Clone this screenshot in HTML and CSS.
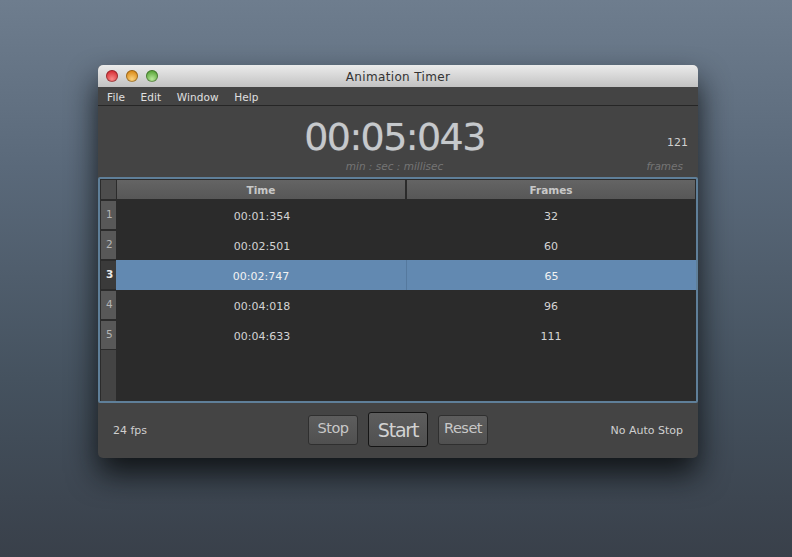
FILE: index.html
```html
<html>
  <head>
    <title>Animation Timer</title>
    <link rel="stylesheet" href="styles.css">
  </head>
  <body>
    <div class="window">
      <div class="titlebar">
        <div class="lights">
          <span class="light red"></span>
          <span class="light yellow"></span>
          <span class="light green"></span>
        </div>
        <div class="title">Animation Timer</div>
      </div>
      <div class="menubar">
        <span>File</span>
        <span>Edit</span>
        <span>Window</span>
        <span>Help</span>
      </div>
      <div class="readout">
        <div class="clock">
          <div class="clock-time">00:05:043</div>
          <div class="caption">min : sec : millisec</div>
        </div>
        <div class="count">
          <div class="count-value">121</div>
          <div class="caption">frames</div>
        </div>
      </div>
      <div class="table">
        <div class="head">
          <div class="corner"></div>
          <div class="head-cell">Time</div>
          <div class="head-cell">Frames</div>
        </div>
        <div class="row">
          <div class="num">1</div>
          <div class="cell">00:01:354</div>
          <div class="cell">32</div>
        </div>
        <div class="row">
          <div class="num">2</div>
          <div class="cell">00:02:501</div>
          <div class="cell">60</div>
        </div>
        <div class="row selected">
          <div class="num">3</div>
          <div class="cell">00:02:747</div>
          <div class="cell">65</div>
        </div>
        <div class="row">
          <div class="num">4</div>
          <div class="cell">00:04:018</div>
          <div class="cell">96</div>
        </div>
        <div class="row">
          <div class="num">5</div>
          <div class="cell">00:04:633</div>
          <div class="cell">111</div>
        </div>
        <div class="filler">
          <div class="filler-side"></div>
        </div>
      </div>
      <div class="footer">
        <div class="fps">24 fps</div>
        <div class="buttons">
          <button class="btn">Stop</button>
          <button class="btn btn-main">Start</button>
          <button class="btn">Reset</button>
        </div>
        <div class="autostop">No Auto Stop</div>
      </div>
    </div>
  </body>
</html>
```

FILE: styles.css
```css
html,
body {
  height: 100%;
}

body {
  margin: 0;
  overflow: hidden;
  box-sizing: border-box;
  padding: 65px 0 0 98px;
  font-family: "DejaVu Sans", sans-serif;
  color: #cfcfcf;
  background: linear-gradient(180deg, #6e7d8e 0%, #5a697a 30%, #45525f 68%, #39404a 100%);
}

.window {
  width: 600px;
  height: 393px;
  display: flex;
  flex-direction: column;
  background: #444444;
  border-radius: 5px;
  box-shadow: 0 16px 30px rgba(8, 10, 12, 0.85);
}

.titlebar {
  position: relative;
  height: 22px;
  flex: none;
  border-radius: 5px 5px 0 0;
  background: linear-gradient(180deg, #ebebeb, #c2c2c2);
}

.title {
  text-align: center;
  font-size: 12px;
  line-height: 24px;
  height: 22px;
  letter-spacing: 0.35px;
  color: #333333;
}

.lights {
  position: absolute;
  left: 8px;
  top: 5px;
  display: flex;
  gap: 8px;
}

.light {
  width: 12px;
  height: 12px;
  border-radius: 50%;
  box-shadow: inset 0 0 0 1px rgba(0, 0, 0, 0.3);
}

.red {
  background: radial-gradient(circle at 50% 75%, #f98a88, #d8343a 70%);
}

.yellow {
  background: radial-gradient(circle at 50% 75%, #fbd27c, #dc8e1e 70%);
}

.green {
  background: radial-gradient(circle at 50% 75%, #b8e89a, #5ea83e 70%);
}

.menubar {
  height: 18px;
  flex: none;
  display: flex;
  gap: 15.5px;
  padding-left: 9px;
  font-size: 10.5px;
  letter-spacing: 0.1px;
  line-height: 20px;
  color: #e0e0e0;
  border-bottom: 1px solid #262626;
}

.readout {
  height: 71px;
  flex: none;
  position: relative;
  text-align: center;
}

.clock {
  padding-right: 7px;
}

.clock-time {
  padding-top: 9px;
  font-size: 38px;
  line-height: 44px;
  color: #c6c9cc;
  letter-spacing: -1.6px;
  text-shadow: 0 0 1px rgba(198, 201, 204, 0.5);
}

.caption {
  font-size: 10.5px;
  font-style: italic;
  line-height: 14px;
  color: #757575;
}

.count {
  position: absolute;
  right: 10px;
  top: 29px;
  text-align: right;
}

.count-value {
  font-size: 11px;
  line-height: 16px;
  color: #d0d0d0;
}

.count .caption {
  margin-top: 8px;
  margin-right: 5px;
}

.table {
  height: 226px;
  flex: none;
  box-sizing: border-box;
  display: flex;
  flex-direction: column;
  padding: 1px 1px 0 1px;
  border: 2px solid #5f7f99;
  border-radius: 2px;
  background: #2b2b2b;
}

.head {
  height: 20px;
  flex: none;
  display: grid;
  grid-template-columns: 16px 290px 1fr;
  background: #2b2b2b;
}

.corner {
  width: 15px;
  height: 19px;
  background: #4d4d4d;
}

.head-cell {
  height: 19px;
  font-size: 10.5px;
  font-weight: bold;
  line-height: 20px;
  text-align: center;
  color: #c8c8c8;
  background: linear-gradient(180deg, #646464, #575757);
}

.corner + .head-cell {
  border-right: 2px solid #2b2b2b;
}

.row {
  height: 30px;
  flex: none;
  display: grid;
  grid-template-columns: 16px 290px 1fr;
  grid-template-rows: 30px;
  font-size: 11px;
}

.cell {
  box-sizing: border-box;
  height: 30px;
  padding-top: 3px;
  line-height: 28px;
  text-align: center;
  color: #d4d4d4;
}

.num {
  width: 15px;
  height: 30px;
  box-sizing: border-box;
  padding-left: 5px;
  font-size: 10.5px;
  line-height: 26px;
  color: #b5b5b5;
  background: #585858;
  border-top: 1px solid #2b2b2b;
  border-bottom: 1px solid #2b2b2b;
}

.selected {
  margin-right: -1px;
}

.selected .cell {
  background: #6289b1;
  color: #f2f2f2;
}

.selected .num + .cell {
  margin-left: -1px;
  border-right: 1px solid #55799e;
}

.selected .num {
  background: #3a3a3a;
  color: #e8e8e8;
  font-weight: bold;
}

.filler {
  flex: 1;
}

.filler-side {
  width: 15px;
  height: 100%;
  background: #444444;
}

.footer {
  flex: 1;
  display: flex;
  align-items: center;
  padding: 0 15px;
  font-size: 11px;
  color: #cfcfcf;
}

.fps {
  flex: 1;
}

.autostop {
  flex: 1;
  text-align: right;
}

.buttons {
  display: flex;
  align-items: center;
  gap: 10px;
  margin-bottom: 2px;
}

.btn {
  width: 50px;
  height: 30px;
  padding: 0 0 3px;
  font-family: "DejaVu Sans", sans-serif;
  font-size: 14.5px;
  letter-spacing: -0.5px;
  color: #c8c8c8;
  background: linear-gradient(180deg, #5d5d5d, #505050);
  border: 1px solid #2f2f2f;
  border-radius: 3px;
}

.btn-main {
  width: 60px;
  height: 35px;
  padding: 0;
  font-size: 19px;
  letter-spacing: -1.2px;
  color: #d2d2d2;
  border-color: #151515;
}
```
